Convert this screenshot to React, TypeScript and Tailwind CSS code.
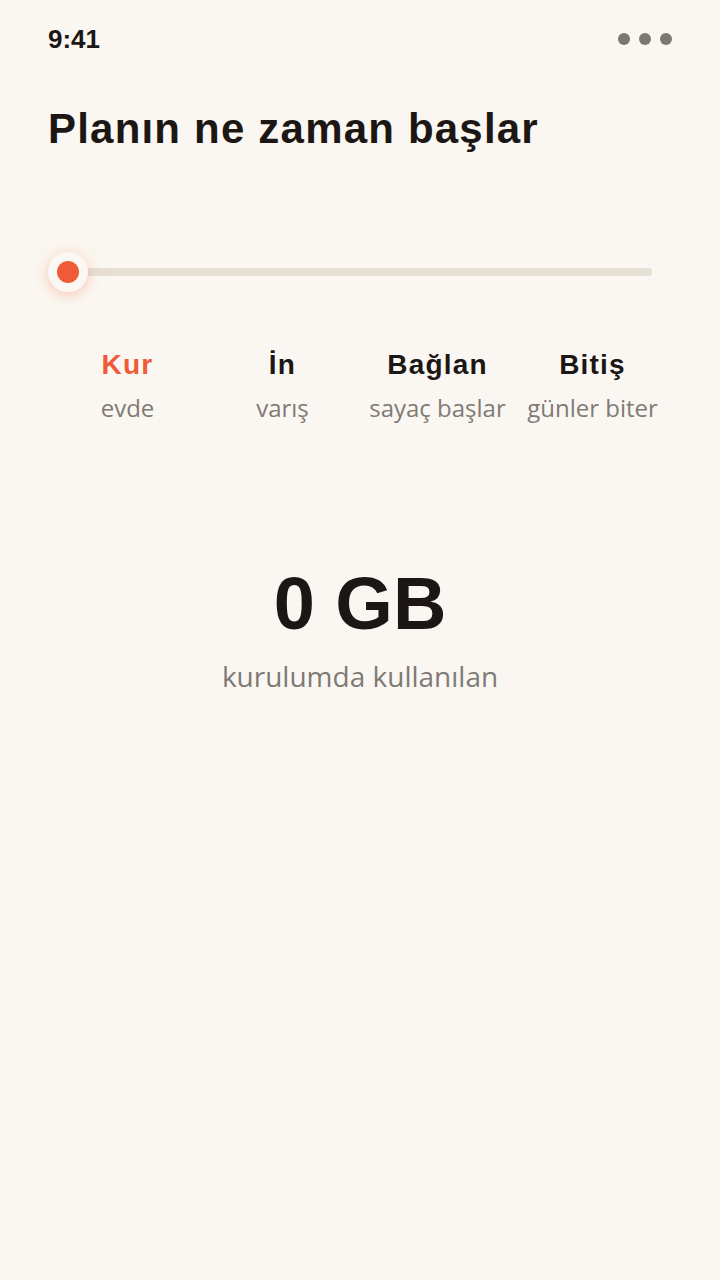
const steps = [
  { title: 'Kur', sub: 'evde', active: true },
  { title: 'İn', sub: 'varış', active: false },
  { title: 'Bağlan', sub: 'sayaç başlar', active: false },
  { title: 'Bitiş', sub: 'günler biter', active: false },
]

const display = { fontFamily: '"Liberation Sans", Arial, sans-serif' }
const body = { fontFamily: '"Open Sans", "Noto Sans", sans-serif' }

export default function App() {
  return (
    <div className="min-h-[1280px] w-full bg-[#faf7f2] text-[#1c1714]">
      {/* status bar */}
      <div className="flex items-center justify-between pl-[48px] pr-[48px] pt-[22px] h-[56px]">
        <span className="text-[26px] font-semibold" style={display}>9:41</span>
        <div className="flex gap-[9px]">
          <span className="w-[12px] h-[12px] rounded-full bg-[#7b7772]" />
          <span className="w-[12px] h-[12px] rounded-full bg-[#7b7772]" />
          <span className="w-[12px] h-[12px] rounded-full bg-[#7b7772]" />
        </div>
      </div>

      <h1 className="px-[48px] mt-[47px] text-[42px] leading-[52px] font-bold tracking-[1.2px]" style={display}>
        Planın ne zaman başlar
      </h1>

      {/* slider */}
      <div className="relative mx-[48px] mt-[97px] h-[40px] flex items-center">
        <div className="ml-[12px] mr-[20px] flex-1 h-[8px] rounded-full bg-[#e6dfd4]" />
        <div className="absolute left-0 top-0 w-[40px] h-[40px] rounded-full bg-[#fbf8f3] flex items-center justify-center shadow-[0_3px_6px_2px_rgba(240,90,58,0.14),0_2px_16px_8px_rgba(240,140,58,0.08)]">
          <div className="w-[22px] h-[22px] rounded-full bg-[#f05a38]" />
        </div>
      </div>

      {/* step labels */}
      <div className="grid grid-cols-4 px-[50px] mt-[55px]">
        {steps.map((s) => (
          <div key={s.title} className="flex flex-col items-center">
            <span
              className={`text-[28px] leading-[36px] font-bold tracking-[1.2px] ${s.active ? 'text-[#f05a38]' : 'text-[#1c1714]'}`}
              style={display}
            >
              {s.title}
            </span>
            <span className="mt-[9px] text-[24px] leading-[32px] font-medium text-[#807a74] whitespace-nowrap" style={body}>
              {s.sub}
            </span>
          </div>
        ))}
      </div>

      {/* usage */}
      <div className="flex flex-col items-center mt-[140px]">
        <span className="text-[74px] leading-[80px] font-bold" style={display}>0 GB</span>
        <span className="mt-[14px] text-[28px] leading-[36px] text-[#7f7a74]" style={body}>kurulumda kullanılan</span>
      </div>
    </div>
  )
}
